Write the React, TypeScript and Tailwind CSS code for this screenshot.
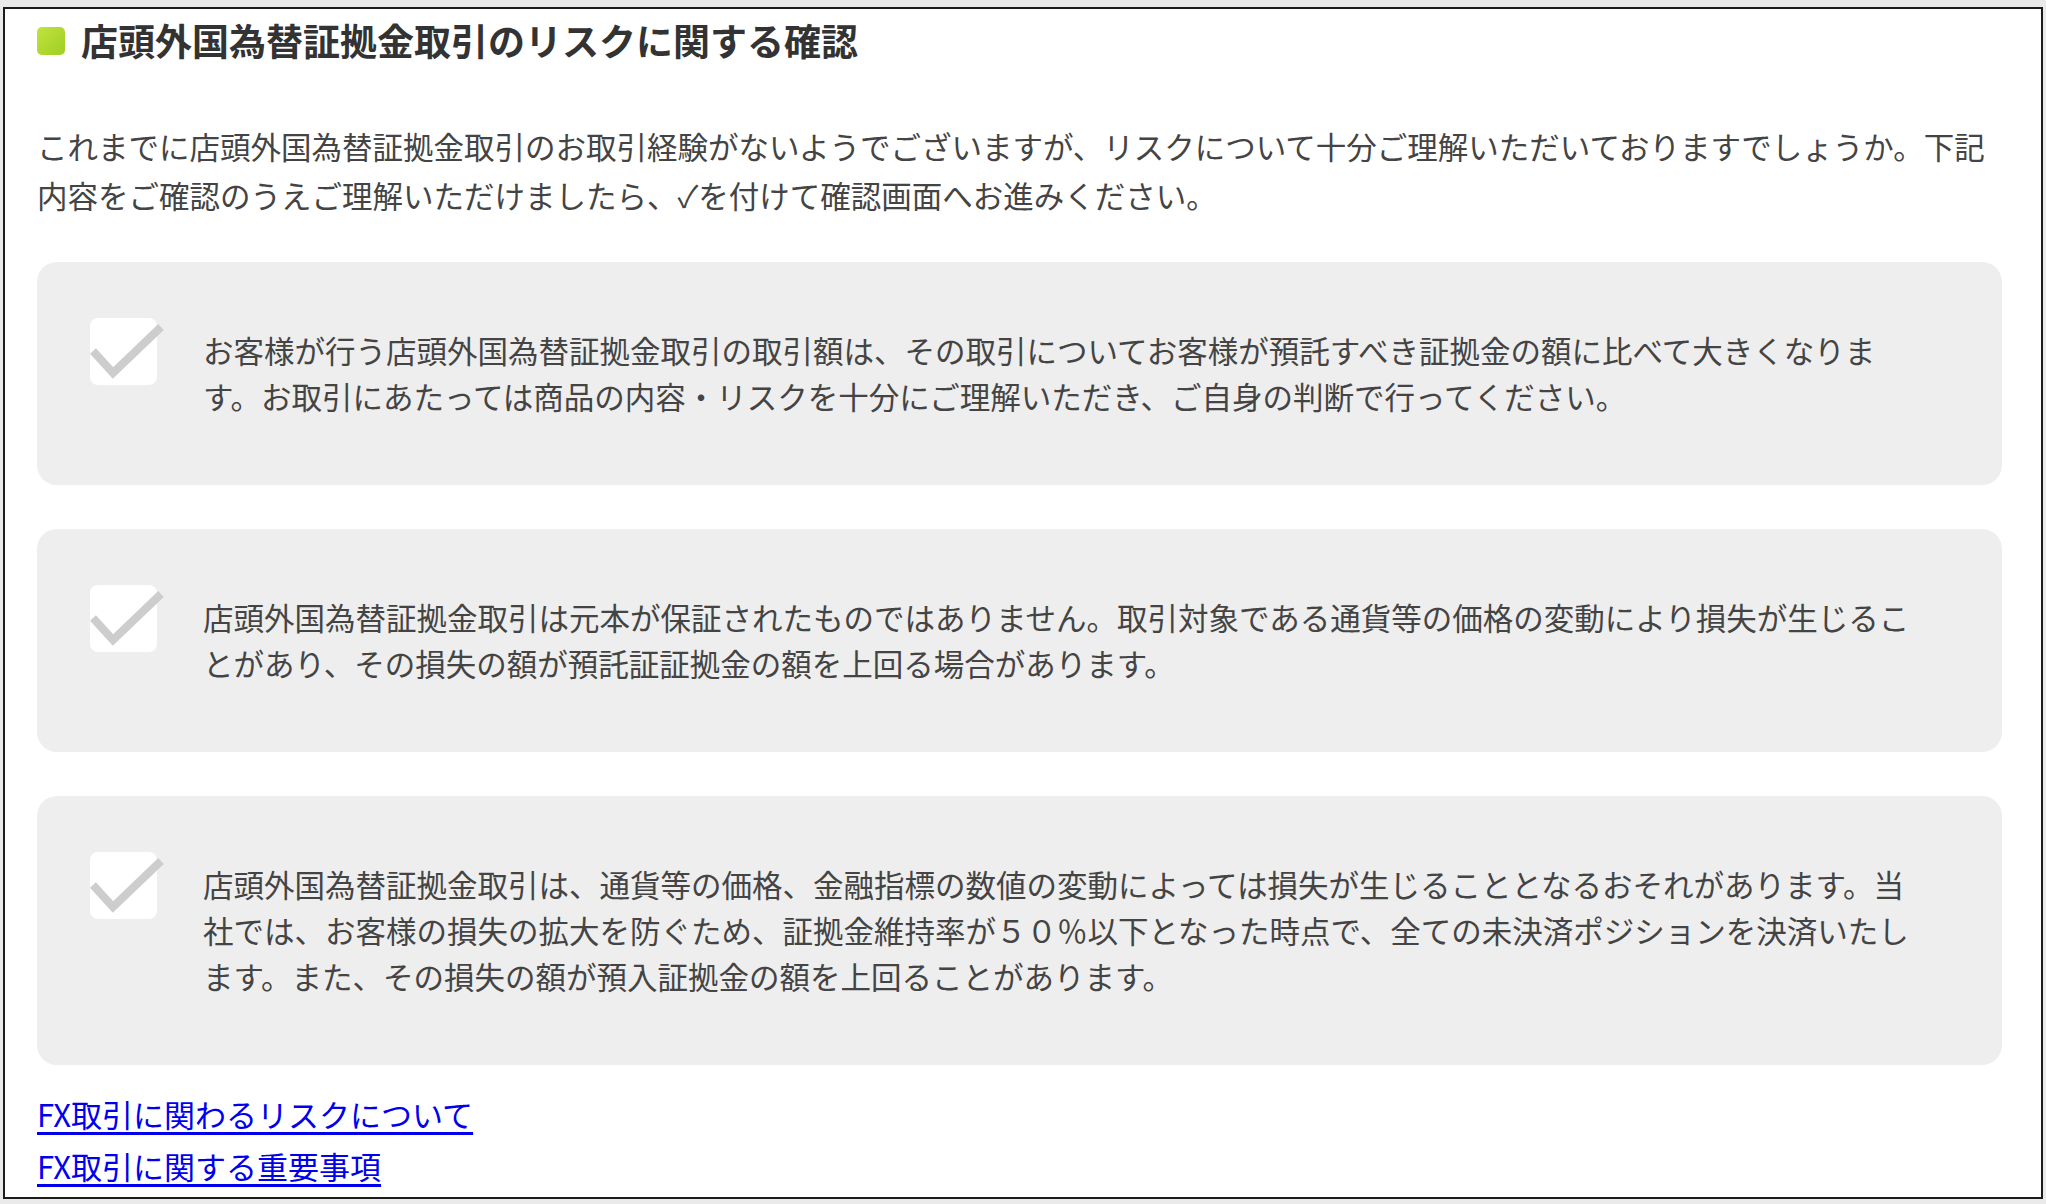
const FONT = '"Noto Sans CJK JP", "Noto Sans", sans-serif';

const ITEMS: string[] = [
  'お客様が行う店頭外国為替証拠金取引の取引額は、その取引についてお客様が預託すべき証拠金の額に比べて大きくなります。お取引にあたっては商品の内容・リスクを十分にご理解いただき、ご自身の判断で行ってください。',
  '店頭外国為替証拠金取引は元本が保証されたものではありません。取引対象である通貨等の価格の変動により損失が生じることがあり、その損失の額が預託証証拠金の額を上回る場合があります。',
  '店頭外国為替証拠金取引は、通貨等の価格、金融指標の数値の変動によっては損失が生じることとなるおそれがあります。当社では、お客様の損失の拡大を防ぐため、証拠金維持率が５０％以下となった時点で、全ての未決済ポジションを決済いたします。また、その損失の額が預入証拠金の額を上回ることがあります。',
];

function CheckBox() {
  return (
    <div className="relative w-[67px] h-[67px] flex-none rounded-[8px] bg-white">
      <svg
        className="absolute left-0 top-0 overflow-visible"
        width="67"
        height="67"
        viewBox="0 0 67 67"
      >
        <path d="M3 33 L23 55 L71 9" fill="none" stroke="#cdcdcd" strokeWidth="8" />
      </svg>
    </div>
  );
}

function RiskCard({ text }: { text: string }) {
  return (
    <div className="flex gap-[46px] rounded-[20px] bg-[#eeeeee] pl-[53px] pr-[69px] pt-[56px] pb-[57px]">
      <CheckBox />
      <p className="flex-1 my-[9px] text-[30.5px] leading-[46px] text-[#444444]">{text}</p>
    </div>
  );
}

export default function App() {
  return (
    <div className="w-[2046px] h-[1204px] bg-[#eaeaea] pl-[3px] pt-[7px]" style={{ fontFamily: FONT }}>
      <div className="w-[2040px] h-[1192px] border-2 border-[#1c1c1c] bg-white pl-[32px] pr-[39px] pt-[6px]">
        <h1 className="flex items-center gap-[16px] h-[52px] text-[37px] font-bold text-[#333333]">
          <span className="w-[28px] h-[28px] rounded-[5px] bg-gradient-to-br from-[#c2e23e] to-[#9fcf22]" />
          店頭外国為替証拠金取引のリスクに関する確認
        </h1>

        <p className="mt-[55px] text-[30.5px] leading-[49px] text-[#444444]">
          これまでに店頭外国為替証拠金取引のお取引経験がないようでございますが、リスクについて十分ご理解いただいておりますでしょうか。下記内容をご確認のうえご理解いただけましたら、✓を付けて確認画面へお進みください。
        </p>

        <div className="mt-[42px] flex flex-col gap-[44px]">
          {ITEMS.map((t, i) => (
            <RiskCard key={i} text={t} />
          ))}
        </div>

        <div className="mt-[23px] flex flex-col items-start text-[31px] leading-[52px]">
          <a href="#" className="text-[#0000ee] underline underline-offset-[5px]">
            FX取引に関わるリスクについて
          </a>
          <a href="#" className="text-[#0000ee] underline underline-offset-[5px]">
            FX取引に関する重要事項
          </a>
        </div>
      </div>
    </div>
  );
}
